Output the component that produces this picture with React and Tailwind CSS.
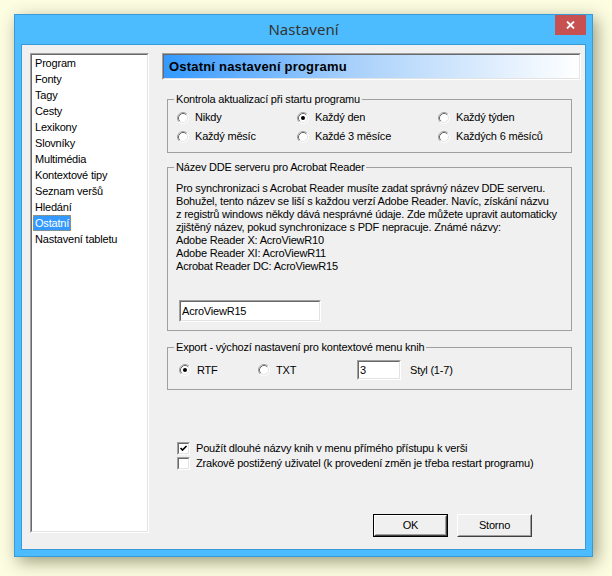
import React from "react";

const F = "[font-family:'Liberation_Sans',Arial,sans-serif]";

function Sunken({ className = "", innerClassName = "", children }) {
  return (
    <div className={`border border-t-[#a0a0a0] border-l-[#a0a0a0] border-b-white border-r-white ${className}`}>
      <div className={`h-full w-full border border-t-[#696969] border-l-[#696969] border-b-[#e3e3e3] border-r-[#e3e3e3] ${innerClassName}`}>
        {children}
      </div>
    </div>
  );
}

function Radio({ checked, label, className = "" }) {
  return (
    <div className={`flex items-center ${className}`}>
      <svg width="12" height="12" viewBox="0 0 12 12" className="shrink-0">
        <circle cx="6" cy="6" r="5" fill="#ffffff" />
        <path d="M2.11 9.89 A5.5 5.5 0 0 1 9.89 2.11" fill="none" stroke="#a0a0a0" strokeWidth="1" />
        <path d="M9.89 2.11 A5.5 5.5 0 0 1 2.11 9.89" fill="none" stroke="#ffffff" strokeWidth="1" />
        <path d="M2.82 9.18 A4.5 4.5 0 0 1 9.18 2.82" fill="none" stroke="#696969" strokeWidth="1" />
        <path d="M9.18 2.82 A4.5 4.5 0 0 1 2.82 9.18" fill="none" stroke="#e3e3e3" strokeWidth="1" />
        {checked && <circle cx="6" cy="6" r="2" fill="#000000" />}
      </svg>
      <span className="ml-[6px] whitespace-nowrap">{label}</span>
    </div>
  );
}

function Checkbox({ checked, label }) {
  return (
    <div className="flex h-[15px] items-center">
      <Sunken className="h-[13px] w-[13px] shrink-0" innerClassName="bg-white">
        {checked && (
          <svg width="9" height="9" viewBox="0 0 9 9" className="block">
            <path d="M1.5 4 L3.5 6 L7.5 2" fill="none" stroke="#000000" strokeWidth="1.6" />
          </svg>
        )}
      </Sunken>
      <span className="ml-[6px] whitespace-nowrap">{label}</span>
    </div>
  );
}

function Group({ label, className = "", children }) {
  return (
    <div className={`relative border border-[#a0a0a0] ${className}`}>
      <span className="absolute left-[6px] top-[-8px] bg-[#f0f0f0] px-[2px] leading-[14px] whitespace-nowrap">
        {label}
      </span>
      {children}
    </div>
  );
}

function Button({ children, isDefault }) {
  const inner = (
    <div className="flex h-full w-full items-center justify-center border border-t-white border-l-white border-b-[#404040] border-r-[#404040] bg-[#f0f0f0]">
      <div className="flex h-full w-full items-center justify-center border border-t-[#f0f0f0] border-l-[#f0f0f0] border-b-[#a0a0a0] border-r-[#a0a0a0]">
        {children}
      </div>
    </div>
  );
  return (
    <div className={`h-[23px] w-[75px] ${isDefault ? "border border-black" : ""}`}>{inner}</div>
  );
}

const items = [
  "Program",
  "Fonty",
  "Tagy",
  "Cesty",
  "Lexikony",
  "Slovníky",
  "Multimédia",
  "Kontextové tipy",
  "Seznam veršů",
  "Hledání",
  "Ostatní",
  "Nastavení tabletu",
];

export default function App() {
  return (
    <div className={`h-[576px] w-[612px] overflow-hidden bg-[#fdfde2] pl-[14px] pt-[14px] ${F} text-[11px] tracking-[-0.2px] text-black`}>
      <div className="flex h-[543px] w-[579px] flex-col border border-[#3a9ad9] bg-[#4dbcfe] px-[6px] pb-[6px] shadow-[4px_5px_16px_rgba(40,40,0,0.45)]">
        {/* title bar */}
        <div className="relative flex h-[29px] shrink-0 items-center justify-center">
          <span className="[font-family:'Noto_Sans',sans-serif] text-[15px] leading-none tracking-normal text-[#333333] pb-[1px]">Nastavení</span>
          <div className="absolute right-[0px] top-0 flex h-[20px] w-[31px] items-center justify-center bg-[#c75050]">
            <svg width="9" height="8" viewBox="0 0 9 8">
              <path d="M1 0.5 L8 7.5 M8 0.5 L1 7.5" stroke="#ffffff" strokeWidth="1.8" />
            </svg>
          </div>
        </div>
        {/* content */}
        <div className="flex min-h-0 flex-1 border border-[#3a9ad9] bg-[#f0f0f0] pl-[8px] pr-[4px] pt-[8px]">
          {/* list */}
          <Sunken className="h-[480px] w-[119px] shrink-0" innerClassName="bg-white pt-0">
            <div className="flex flex-col pl-[1px]">
              {items.map((it) =>
                it === "Ostatní" ? (
                  <div key={it} className="flex h-[16px] items-center">
                    <span className="flex h-[16px] items-center border border-dotted border-[#d08a30] bg-[#3399ff] px-[1px] text-white">
                      {it}
                    </span>
                  </div>
                ) : (
                  <div key={it} className="flex h-[16px] items-center pl-[2px] whitespace-nowrap">
                    {it}
                  </div>
                )
              )}
            </div>
          </Sunken>

          {/* right column */}
          <div className="ml-[13px] flex w-[419px] flex-col">
            {/* banner */}
            <div className="h-[27px] border border-t-[#a0a0a0] border-l-[#a0a0a0] border-b-white border-r-white">
              <div className="flex h-full items-center border border-t-[#696969] border-l-[#696969] border-b-[#e3e3e3] border-r-[#e3e3e3] bg-[linear-gradient(to_right,#3399ff,#a8d0fb_45%,#ffffff)] pl-[5px]">
                <span className="text-[13px] font-bold tracking-[0.2px]">Ostatní nastavení programu</span>
              </div>
            </div>

            {/* group 1 */}
            <Group label="Kontrola aktualizací při startu programu" className="ml-[5px] mt-[19px] h-[54px] w-[405px]">
              <div className="grid grid-cols-[120px_141px_1fr] grid-rows-[19px_19px] pl-[9px] pt-[8px]">
                <Radio label="Nikdy" />
                <Radio label="Každý den" checked />
                <Radio label="Každý týden" />
                <Radio label="Každý měsíc" />
                <Radio label="Každé 3 měsíce" />
                <Radio label="Každých 6 měsíců" />
              </div>
            </Group>

            {/* group 2 */}
            <Group label="Název DDE serveru pro Acrobat Reader" className="ml-[5px] mt-[14px] h-[164px] w-[405px]">
              <div className="pl-[8px] pt-[14px] leading-[13px] whitespace-nowrap">
                <div>Pro synchronizaci s Acrobat Reader musíte zadat správný název DDE serveru.</div>
                <div>Bohužel, tento název se liší s každou verzí Adobe Reader. Navíc, získání názvu</div>
                <div>z registrů windows někdy dává nesprávné údaje. Zde můžete upravit automaticky</div>
                <div>zjištěný název, pokud synchronizace s PDF nepracuje. Známé názvy:</div>
                <div>Adobe Reader X: AcroViewR10</div>
                <div>Adobe Reader XI: AcroViewR11</div>
                <div>Acrobat Reader DC: AcroViewR15</div>
              </div>
              <Sunken className="ml-[11px] mt-[27px] h-[22px] w-[142px]" innerClassName="bg-white flex items-center pl-[1px]">
                <span>AcroViewR15</span>
              </Sunken>
            </Group>

            {/* group 3 */}
            <Group label="Export - výchozí nastavení pro kontextové menu knih" className="ml-[5px] mt-[16px] h-[43px] w-[405px]">
              <div className="flex h-[20px] items-center pl-[11px] mt-[12px]">
                <Radio label="RTF" checked className="w-[79px]" />
                <Radio label="TXT" className="w-[99px]" />
                <Sunken className="h-[20px] w-[44px]" innerClassName="bg-white flex items-center pl-[1px]">
                  <span>3</span>
                </Sunken>
                <span className="ml-[9px]">Styl (1-7)</span>
              </div>
            </Group>

            {/* checkboxes */}
            <div className="ml-[15px] mt-[51px] flex flex-col">
              <Checkbox checked label="Použít dlouhé názvy knih v menu přímého přístupu k verši" />
              <Checkbox label="Zrakově postižený uživatel (k provedení změn je třeba restart programu)" />
            </div>

            {/* buttons */}
            <div className="ml-[211px] mt-[43px] flex gap-[9px]">
              <Button isDefault>OK</Button>
              <Button>Storno</Button>
            </div>
          </div>
        </div>
      </div>
    </div>
  );
}
